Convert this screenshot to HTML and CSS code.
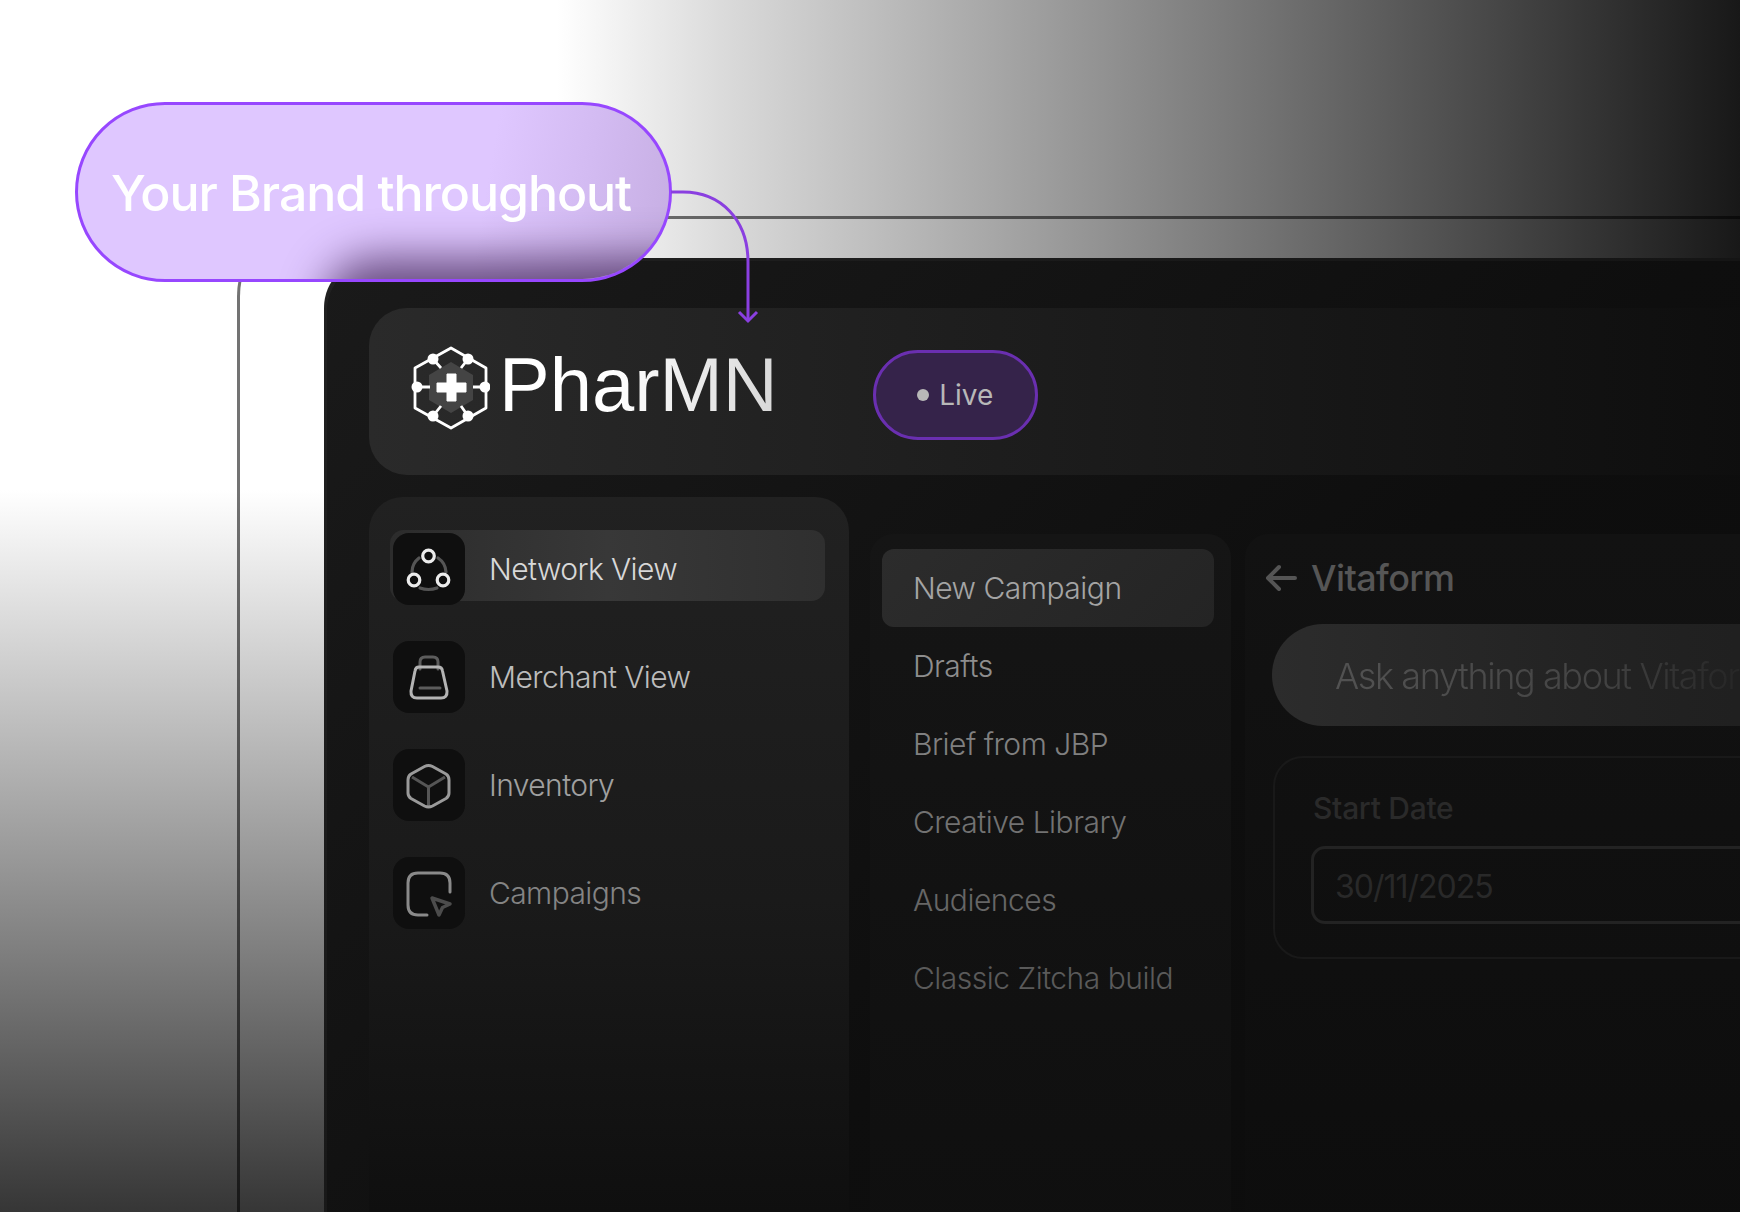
FILE: index.html
```html
<!DOCTYPE html>
<html lang="en">
<head>
<meta charset="UTF-8">
<title>PharMN - Your Brand throughout</title>
<link rel="stylesheet" href="styles.css">
</head>
<body>
<div class="canvas">
    <div class="band-top"></div>
    <div class="band-left"></div>
    <div class="guide"></div>

    <div class="window">
        <header class="topbar">
            <div class="logo">
                <svg class="logo-mark" viewBox="0 0 80 90" width="80" height="90" fill="none">
                    <path d="M41 17 63 30V55L41 68 19 55V30Z" fill="#444"/>
                    <path d="M41 3 76 23V63L41 83 5 63V23Z" stroke="#fff" stroke-width="2.800" stroke-linejoin="round"/>
                    <path d="M23 14 31 23M58 14 51 23M7 42H20M75 42H63M23 71 31 61M58 71 51 61" stroke="#fff" stroke-width="2.800"/>
                    <circle cx="23" cy="14" r="5.500" fill="#fff"/>
                    <circle cx="58" cy="14" r="5.500" fill="#fff"/>
                    <circle cx="7" cy="42" r="5.500" fill="#fff"/>
                    <circle cx="75" cy="42" r="5.500" fill="#fff"/>
                    <circle cx="23" cy="71" r="5.500" fill="#fff"/>
                    <circle cx="58" cy="71" r="5.500" fill="#fff"/>
                    <path d="M37 29H46V38H56V47H46V56H37V47H27V38H37Z" fill="#fff" stroke="#fff" stroke-width="1" stroke-linejoin="round"/>
                </svg>
                <span class="logo-name">PharMN</span>
            </div>
            <div class="live"><span class="live-dot"></span>Live</div>
        </header>

        <div class="body">
            <aside class="sidebar">
                <a class="side-item active" href="#">
                    <span class="side-icon">
                        <svg viewBox="0 0 72 72" width="72" height="72" fill="none" stroke-width="3.200" stroke-linecap="round">
                            <path d="M19 39A18 18 0 0 1 26 25M45 25A18 18 0 0 1 53 39M27 55Q35.500 58 44 55" stroke="#555"/>
                            <circle cx="35.500" cy="23" r="5.800" stroke="#ececec"/>
                            <circle cx="21" cy="47" r="5.800" stroke="#ececec"/>
                            <circle cx="50" cy="47" r="5.800" stroke="#ececec"/>
                        </svg>
                    </span>
                    <span class="side-label">Network View</span>
                </a>
                <a class="side-item" href="#">
                    <span class="side-icon">
                        <svg viewBox="0 0 72 72" width="72" height="72" fill="none" stroke-width="3" stroke-linecap="round" stroke-linejoin="round">
                            <path d="M27 28V21Q27 16 32 16H40Q45 16 45 21V28" stroke="#5c5c5c"/>
                            <path d="M26 26H45Q49 26 49.500 30L54 50Q54.500 57 48 57H24Q17.500 57 18 50L22 30Q22.500 26 26 26Z" stroke="#b4b4b4"/>
                            <path d="M27 47H47" stroke="#5c5c5c"/>
                        </svg>
                    </span>
                    <span class="side-label dim1">Merchant View</span>
                </a>
                <a class="side-item" href="#">
                    <span class="side-icon">
                        <svg viewBox="0 0 72 72" width="72" height="72" fill="none" stroke-width="3" stroke-linejoin="round">
                            <path d="M19 28 35.500 38 52 28M35.500 38V57" stroke="#555"/>
                            <path d="M31.500 17.500Q35.500 15.500 39.500 17.500L53 25Q56 27 56 31V44Q56 47.500 53 49.500L39.500 57Q35.500 59 31.500 57L18 49.500Q15 47.500 15 44V31Q15 27 18 25Z" stroke="#9a9a9a"/>
                        </svg>
                    </span>
                    <span class="side-label dim2">Inventory</span>
                </a>
                <a class="side-item" href="#">
                    <span class="side-icon">
                        <svg viewBox="0 0 72 72" width="72" height="72" fill="none" stroke-width="3" stroke-linecap="round" stroke-linejoin="round">
                            <path d="M57 35V26Q57 16 47 16H25Q15 16 15 26V48Q15 58 25 58H34" stroke="#8a8a8a"/>
                            <path d="M39 41 57 47 49.500 50.500 46 58Z" stroke="#4c4c4c" stroke-width="3.500"/>
                        </svg>
                    </span>
                    <span class="side-label dim3">Campaigns</span>
                </a>
            </aside>

            <nav class="submenu">
                <a class="sub-item active" href="#">New Campaign</a>
                <a class="sub-item s2" href="#">Drafts</a>
                <a class="sub-item s3" href="#">Brief from JBP</a>
                <a class="sub-item s4" href="#">Creative Library</a>
                <a class="sub-item s5" href="#">Audiences</a>
                <a class="sub-item s6" href="#">Classic Zitcha build</a>
            </nav>

            <section class="detail">
                <div class="detail-head">
                    <svg viewBox="0 0 32 28" width="32" height="28" fill="none" stroke="#555" stroke-width="4" stroke-linecap="round" stroke-linejoin="round">
                        <path d="M14 3 3 14 14 25M4 14H30"/>
                    </svg>
                    <h2>Vitaform</h2>
                </div>
                <div class="ask"><span class="ask-text">Ask anything about Vitaform</span></div>
                <div class="date-card">
                    <div class="date-label">Start Date</div>
                    <div class="date-input">30/11/2025</div>
                </div>
            </section>
        </div>
    </div>

    <div class="callout"><span class="callout-text">Your Brand throughout</span></div>
    <svg class="connector" viewBox="0 0 90 140" width="90" height="140" fill="none" stroke="#8a3fe0" stroke-width="3">
        <path d="M0 2H12C50 2 77 30 77 72V131"/>
        <path d="M68 122 77 131 86 122"/>
    </svg>
</div>
</body>
</html>
```

FILE: styles.css
```css
html, body {
    margin: 0;
    padding: 0;
    background: #fff;
}

.canvas {
    position: relative;
    width: 1740px;
    height: 1212px;
    overflow: hidden;
    background: #fff;
    font-family: "Inter", sans-serif;
}

.band-top {
    position: absolute;
    top: 0;
    left: 0;
    right: 0;
    height: 258px;
    background: linear-gradient(90deg, #fff 32%, #d9d9d9 42%, #181818 100%);
}

.band-left {
    position: absolute;
    top: 490px;
    left: 0;
    width: 324px;
    bottom: 0;
    background: linear-gradient(180deg, #fff 0%, #363636 100%);
}

.guide {
    position: absolute;
    top: 216px;
    left: 237px;
    width: 1600px;
    height: 1100px;
    border-top: 3px solid rgba(0, 0, 0, 0.55);
    border-left: 3px solid rgba(0, 0, 0, 0.55);
    border-top-left-radius: 80px;
}

.window {
    position: absolute;
    top: 258px;
    left: 324px;
    width: 1500px;
    height: 1000px;
    box-sizing: border-box;
    padding: 50px 0 0 45px;
    background: linear-gradient(135deg, #1a1a1a 0%, #0e0e0e 55%, #0b0b0b 100%);
    box-shadow: inset 3px 3px 0 rgba(255, 255, 255, 0.03);
    border-top-left-radius: 50px;
}

.topbar {
    display: flex;
    align-items: center;
    height: 167px;
    box-sizing: border-box;
    padding-left: 41px;
    background: linear-gradient(90deg, #2a2a2a 0%, #1b1b1b 50%, #0e0e0e 95%);
    border-radius: 38px 0 0 38px;
}

.logo {
    display: flex;
    align-items: center;
    gap: 9px;
}

.logo-mark {
    margin-bottom: 3px;
}

.logo-name {
    margin-bottom: 14px;
    font-family: "Liberation Sans", sans-serif;
    font-size: 76px;
    background: linear-gradient(90deg, #fff 40%, #d8d8d8 100%);
    -webkit-background-clip: text;
    background-clip: text;
    color: transparent;
}

.live {
    display: flex;
    align-items: center;
    justify-content: center;
    gap: 10px;
    margin: 7px 0 0 95px;
    width: 165px;
    height: 90px;
    box-sizing: border-box;
    border: 3px solid #6a2fb0;
    border-radius: 45px;
    background: #35234a;
    color: #b8b8b8;
    font-size: 28px;
}

.live-dot {
    width: 12px;
    height: 12px;
    border-radius: 50%;
    background: #b8b8b8;
}

.body {
    display: flex;
    align-items: flex-start;
    margin-top: 22px;
}

.sidebar {
    flex: none;
    width: 480px;
    height: 760px;
    box-sizing: border-box;
    padding: 36px 24px 0 24px;
    background: linear-gradient(180deg, #212121 0%, #1a1a1a 53%, #0f0f0f 94%);
    border-radius: 34px 34px 0 0;
}

.side-item {
    position: relative;
    display: flex;
    align-items: center;
    height: 72px;
    margin-bottom: 36px;
    text-decoration: none;
}

.side-item.active::before {
    content: "";
    position: absolute;
    inset: -3px 0 4px -3px;
    background: linear-gradient(90deg, #2c2c2c 0%, #383838 50%, #2f2f2f 100%);
    border-radius: 14px;
}

.side-icon {
    position: relative;
    flex: none;
    display: flex;
    width: 72px;
    height: 72px;
    background: #0f0f0f;
    border-radius: 16px;
}

.side-label {
    position: relative;
    margin-left: 24px;
    font-size: 30px;
    font-weight: 300;
    letter-spacing: -0.6px;
    color: #d8d8d8;
}

.side-label.dim1 { color: #bcbcbc; }
.side-label.dim2 { color: #a0a0a0; }
.side-label.dim3 { color: #848484; }

.submenu {
    flex: none;
    width: 361px;
    height: 720px;
    box-sizing: border-box;
    margin: 37px 0 0 21px;
    padding: 15px 17px 0 12px;
    background: linear-gradient(180deg, #151515 0%, #0f0f0f 100%);
    border-radius: 24px 24px 0 0;
    display: flex;
    flex-direction: column;
}

.sub-item {
    height: 78px;
    flex: none;
    display: flex;
    align-items: center;
    padding-left: 31px;
    font-size: 30px;
    font-weight: 300;
    letter-spacing: -0.5px;
    color: #8e8e8e;
    text-decoration: none;
    border-radius: 12px;
}

.sub-item.active {
    background: linear-gradient(135deg, #2c2c2c 0%, #242424 100%);
    color: #a4a4a4;
}

.sub-item.s3 { color: #808080; }
.sub-item.s4 { color: #727272; }
.sub-item.s5 { color: #666; }
.sub-item.s6 { color: #5a5a5a; }

.detail {
    flex: none;
    width: 800px;
    height: 720px;
    box-sizing: border-box;
    margin: 37px 0 0 14px;
    padding: 22px 0 0 20px;
    background: linear-gradient(180deg, #121212 0%, #0d0d0d 100%);
    border-radius: 24px 0 0 0;
}

.detail-head {
    display: flex;
    align-items: center;
    gap: 14px;
    height: 44px;
}

.detail-head h2 {
    margin: 0;
    font-size: 36px;
    font-weight: 500;
    letter-spacing: -0.6px;
    color: #565656;
}

.ask {
    margin: 24px 0 0 7px;
    height: 102px;
    line-height: 104px;
    padding-left: 63px;
    background: linear-gradient(90deg, #2c2c2c 0%, #232323 40%, #1a1a1a 100%);
    border-radius: 51px 0 0 51px;
    font-size: 36px;
    font-weight: 300;
    letter-spacing: -1.4px;
    white-space: nowrap;
}

.ask-text {
    background: linear-gradient(90deg, #525252 0%, #444 60%, #282828 90%);
    -webkit-background-clip: text;
    background-clip: text;
    color: transparent;
}

.date-card {
    margin: 30px 0 0 8px;
    height: 203px;
    box-sizing: border-box;
    padding: 32px 0 0 38px;
    border: 2px solid #191919;
    border-radius: 30px 0 0 30px;
}

.date-label {
    font-size: 30px;
    font-weight: 500;
    letter-spacing: -0.3px;
    color: #2a2a2a;
}

.date-input {
    margin: 20px 0 0 -2px;
    height: 78px;
    line-height: 76px;
    box-sizing: border-box;
    padding-left: 21px;
    border: 3px solid #232323;
    border-radius: 14px 0 0 14px;
    font-size: 32px;
    letter-spacing: -1px;
    color: #292929;
}

.callout {
    position: absolute;
    top: 102px;
    left: 75px;
    width: 597px;
    height: 180px;
    box-sizing: border-box;
    padding: 2px 5px 0 0;
    display: flex;
    align-items: center;
    justify-content: center;
    overflow: hidden;
    border: 3px solid #9747ff;
    border-radius: 90px;
    background: linear-gradient(100deg, #dfc7ff 68%, #d3bbf2 84%, #c6aee2 100%);
    color: #fff;
    font-size: 50px;
    font-weight: 500;
    letter-spacing: -1.05px;
}

/* the dark window corner, blurred behind the glass */
.callout::before {
    content: "";
    position: absolute;
    top: 153px;
    left: 246px;
    width: 500px;
    height: 120px;
    background: rgba(30, 0, 50, 0.62);
    border-top-left-radius: 50px;
    filter: blur(22px);
}

.callout-text {
    position: relative;
}

.connector {
    position: absolute;
    top: 190px;
    left: 671px;
}
```
